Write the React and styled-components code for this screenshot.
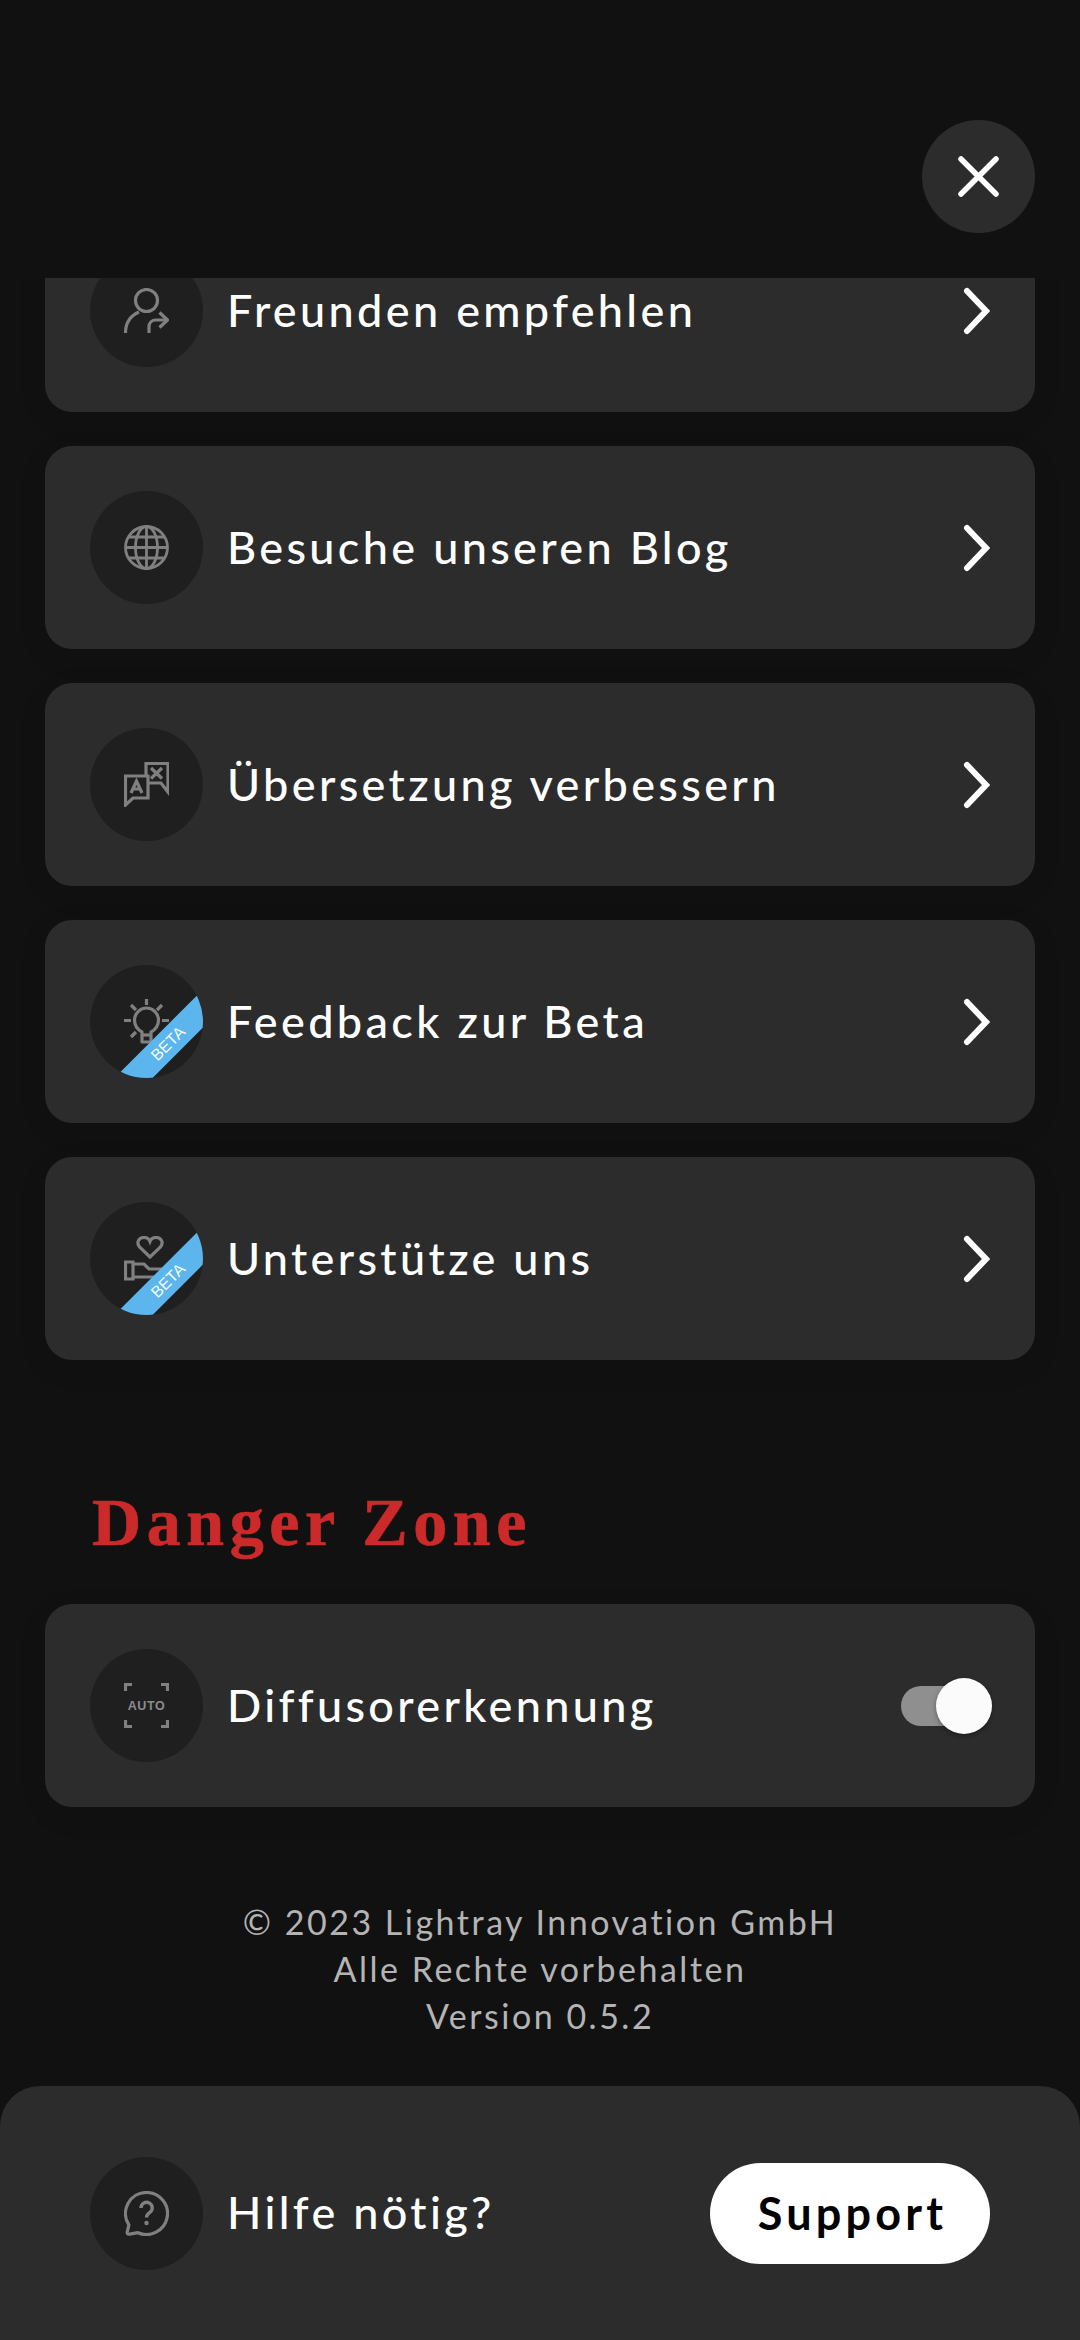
import React from "react";
import styled, { createGlobalStyle } from "styled-components";

const Global = createGlobalStyle`
  html, body { margin: 0; padding: 0; background: #111111; }
  #root { width: 1080px; }
  * { box-sizing: border-box; }
`;

const Page = styled.div`
  width: 1080px;
  height: 2340px;
  background: #111111;
  display: flex;
  flex-direction: column;
  font-family: "Lato", "Noto Sans", sans-serif;
  color: #ffffff;
  overflow: hidden;
`;

const Header = styled.header`
  height: 278px;
  flex: none;
  display: flex;
  justify-content: flex-end;
  padding: 120px 45px 0 0;
`;

const CloseButton = styled.button`
  width: 113px;
  height: 113px;
  border: 0;
  padding: 0;
  border-radius: 50%;
  background: #2c2c2c;
  display: flex;
  align-items: center;
  justify-content: center;
`;

const Scroller = styled.main`
  flex: 1;
  min-height: 0;
  overflow: hidden;
`;

const ScrollContent = styled.div`
  margin-top: -69px;
  padding: 0 45px;
  display: flex;
  flex-direction: column;
`;

const List = styled.div`
  display: flex;
  flex-direction: column;
  gap: 34px;
`;

const Row = styled.div`
  height: 203px;
  border-radius: 27px;
  background: #2c2c2c;
  display: flex;
  align-items: center;
  gap: 24px;
  padding: 0 45px 0 45px;
  box-shadow: 0 8px 30px rgba(0, 0, 0, 0.08);
`;

const IconCircle = styled.div`
  position: relative;
  flex: none;
  width: 113px;
  height: 113px;
  border-radius: 50%;
  background: #1f1f1f;
  display: flex;
  align-items: center;
  justify-content: center;
  overflow: hidden;
`;

const Ribbon = styled.span`
  position: absolute;
  left: -2px;
  top: 64.5px;
  width: 160px;
  height: 27px;
  background: #5cb5ec;
  color: #f4fbff;
  font-family: "Liberation Sans", sans-serif;
  font-size: 16px;
  line-height: 27px;
  text-align: center;
  transform: rotate(-45deg);
`;

const Label = styled.span`
  flex: 1;
  padding-bottom: 2px;
  font-size: 45px;
  font-weight: 500;
  letter-spacing: 3.35px;
  white-space: nowrap;
`;

const Heading = styled.h2`
  margin: 112px 0 32px 47px;
  height: 100px;
  font-family: "Liberation Serif", serif;
  font-size: 68px;
  line-height: 100px;
  font-weight: 700;
  letter-spacing: 5.6px;
  color: #cc2a2a;
  -webkit-text-stroke: 0.7px #cc2a2a;
`;

const Toggle = styled.div`
  position: relative;
  flex: none;
  width: 91px;
  height: 56px;
  margin-right: -2px;
  display: flex;
  align-items: center;
`;

const Track = styled.div`
  width: 84px;
  height: 40px;
  border-radius: 20px;
  background: #8f8f8f;
`;

const Knob = styled.div`
  position: absolute;
  right: 0;
  top: 0;
  width: 56px;
  height: 56px;
  border-radius: 50%;
  background: #fbfbfb;
  box-shadow: 0 2px 5px rgba(0, 0, 0, 0.35);
`;

const Legal = styled.div`
  margin-top: 91px;
  text-align: center;
  font-size: 34px;
  line-height: 47px;
  letter-spacing: 2.5px;
  color: #b4b4b4;
`;

const HelpBar = styled.footer`
  flex: none;
  height: 254px;
  border-radius: 40px 40px 0 0;
  background: #2c2c2c;
  display: flex;
  align-items: center;
  gap: 24px;
  padding: 0 90px 0 90px;
`;

const SupportButton = styled.button`
  flex: none;
  width: 280px;
  height: 101px;
  border: 0;
  padding: 0 0 0 5px;
  border-radius: 51px;
  background: #ffffff;
  color: #000000;
  font-family: inherit;
  font-size: 45px;
  font-weight: 700;
  letter-spacing: 4.2px;
`;

const Glyph = styled.svg`
  display: block;
  flex: none;
  fill: none;
  stroke: ${(p) => p.$color || "#808080"};
  stroke-width: ${(p) => p.$weight || 3.2}px;
  stroke-linecap: ${(p) => p.$cap || "butt"};
  stroke-linejoin: ${(p) => p.$join || "round"};
`;

const IconText = styled.text`
  fill: #8c8c8c;
  stroke: none;
  font-family: "Liberation Sans", sans-serif;
  font-size: 12.5px;
  font-weight: 700;
  letter-spacing: 0.6px;
`;

const Icon = ({ children, weight, join }) => (
  <Glyph width="45" height="45" viewBox="0 0 45 45" $weight={weight} $join={join}>
    {children}
  </Glyph>
);

const CloseIcon = () => (
  <Glyph width="45" height="45" viewBox="0 0 45 45" $color="#fff" $weight={5.5} $cap="round">
    <path d="M5 5 L40 40 M40 5 L5 40" />
  </Glyph>
);

const Chevron = () => (
  <Glyph width="28" height="48" viewBox="0 0 28 48" $color="#fff" $weight={6} $cap="round" $join="miter">
    <path d="M5 4 L24 24 L5 44" />
  </Glyph>
);

const ShareIcon = () => (
  <Icon>
    <circle cx="22.5" cy="12.5" r="11" />
    <path d="M1.5 45 C1.5 34 7 27.5 15 24" />
    <path d="M25 45 V39 C25 34.5 28 32 32 32 H43" />
    <path d="M35.5 24.5 L43.5 32 L35.5 39.5" />
  </Icon>
);

const GlobeIcon = () => (
  <Icon weight={2.8}>
    <circle cx="22.5" cy="22.5" r="21" />
    <ellipse cx="22.5" cy="22.5" rx="11" ry="21" />
    <path d="M22.5 1.5 V43.5 M4.5 12 H40.5 M1.5 22.5 H43.5 M4.5 33 H40.5" />
  </Icon>
);

const TranslateIcon = () => (
  <Icon join="miter">
    <path d="M22 14 V1.5 H44 V30 L37 21 H25" />
    <path d="M1.5 14 H24 V36 H9 L1.5 43 Z" />
    <path d="M7 31 L12.5 19 L18 31 M9 27 H16" />
    <path d="M27 6 L38 16.5 M38 6 L27 16.5" />
  </Icon>
);

const BulbIcon = () => (
  <Icon>
    <path d="M22.5 0 V6 M0 21.5 H7 M38 21.5 H45 M7 6 L12 11 M38 6 L33 11 M7 38 L12 33" />
    <path d="M18 33 C13.5 30.5 10.5 26 10.5 21 A12 12 0 0 1 34.5 21 C34.5 26 31.5 30.5 27 33 V43 H18 Z" />
    <path d="M18 36 H27" />
  </Icon>
);

const HandHeartIcon = () => (
  <Icon join="miter">
    <path d="M26 21 L16 11.5 C11.5 6.5 15 1.5 20 1.5 C23 1.5 25 3 26 5.5 C27 3 29 1.5 32 1.5 C37 1.5 40.5 6.5 36 11.5 Z" />
    <path d="M1.5 26 H9 V43 H1.5 Z" />
    <path d="M9 28 H20 L25 33 H38 M9 41 H34" />
  </Icon>
);

const AutoIcon = () => (
  <Icon join="miter">
    <path d="M1.5 8 V1.5 H8 M37 1.5 H43.5 V8 M1.5 37 V43.5 H8 M37 43.5 H43.5 V37" />
    <IconText x="22.5" y="27" textAnchor="middle">AUTO</IconText>
  </Icon>
);

const HelpIcon = () => (
  <Icon>
    <path d="M22.5 1.5 A21 21 0 1 1 14 41.7 L5.5 43.2 Q2.6 43.5 3.3 40.6 L4.9 34 A21 21 0 0 1 22.5 1.5 Z" />
    <path d="M17 17 A5.6 5.6 0 1 1 25.6 21.6 C23.5 23 22.5 24 22.5 26.6" strokeWidth="3.4" />
    <circle cx="22.5" cy="32" r="1.2" strokeWidth="2" />
  </Icon>
);

const items = [
  { label: "Freunden empfehlen", icon: <ShareIcon /> },
  { label: "Besuche unseren Blog", icon: <GlobeIcon /> },
  { label: "Übersetzung verbessern", icon: <TranslateIcon /> },
  { label: "Feedback zur Beta", icon: <BulbIcon />, beta: true },
  { label: "Unterstütze uns", icon: <HandHeartIcon />, beta: true },
];

export default function App() {
  return (
    <Page>
      <Global />
      <Header>
        <CloseButton aria-label="Schließen">
          <CloseIcon />
        </CloseButton>
      </Header>
      <Scroller>
        <ScrollContent>
          <List>
            {items.map((item) => (
              <Row key={item.label}>
                <IconCircle>
                  {item.icon}
                  {item.beta && <Ribbon>BETA</Ribbon>}
                </IconCircle>
                <Label>{item.label}</Label>
                <Chevron />
              </Row>
            ))}
          </List>
          <Heading>Danger Zone</Heading>
          <Row>
            <IconCircle>
              <AutoIcon />
            </IconCircle>
            <Label>Diffusorerkennung</Label>
            <Toggle>
              <Track />
              <Knob />
            </Toggle>
          </Row>
          <Legal>
            © 2023 Lightray Innovation GmbH
            <br />
            Alle Rechte vorbehalten
            <br />
            Version 0.5.2
          </Legal>
        </ScrollContent>
      </Scroller>
      <HelpBar>
        <IconCircle>
          <HelpIcon />
        </IconCircle>
        <Label>Hilfe nötig?</Label>
        <SupportButton>Support</SupportButton>
      </HelpBar>
    </Page>
  );
}
